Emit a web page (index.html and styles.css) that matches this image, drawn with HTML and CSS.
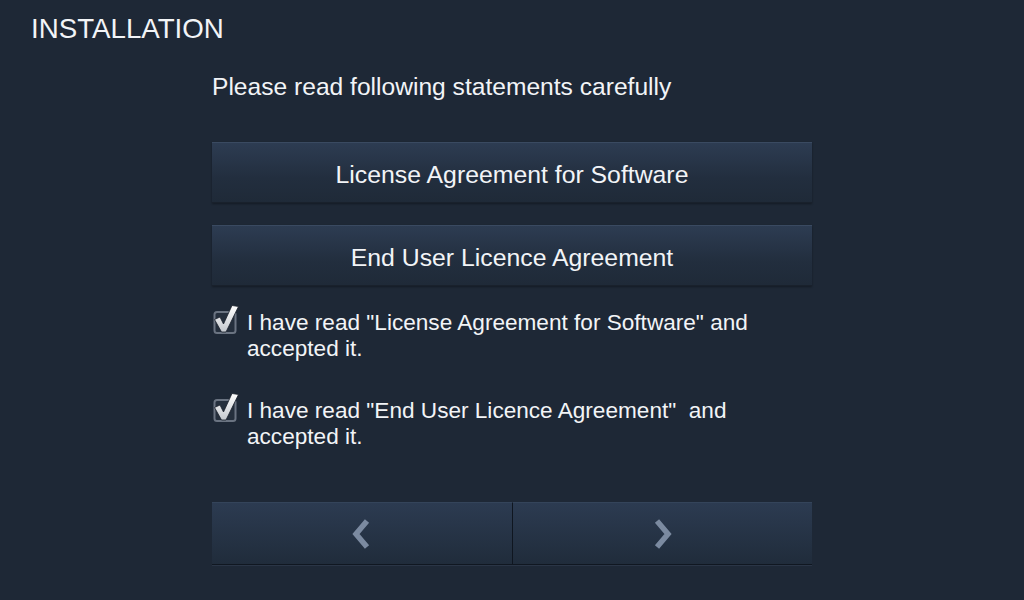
FILE: index.html
```html
<!DOCTYPE html>
<html lang="en">
<head>
    <meta charset="UTF-8">
    <title>Installation</title>
    <link rel="stylesheet" href="styles.css">
</head>
<body>
    <h1 class="title">INSTALLATION</h1>
    <div class="panel">
        <p class="intro">Please read following statements carefully</p>
        <button type="button" class="doc-btn">License Agreement for Software</button>
        <button type="button" class="doc-btn">End User Licence Agreement</button>
        <label class="check-row">
            <span class="check-box">
                <svg viewBox="0 0 26 29" width="26" height="29">
                    <defs>
                        <linearGradient id="tick" x1="0" y1="0" x2="0" y2="1">
                            <stop offset="0" stop-color="#ffffff"/>
                            <stop offset="1" stop-color="#c4c8ce"/>
                        </linearGradient>
                    </defs>
                    <rect x="1.5" y="7" width="21" height="21" rx="2.5" fill="#252f3d" stroke="#6a7381" stroke-width="2"/>
                    <path d="M1.5 14.5 L7 12 L10.5 19 L19 0.5 L25.5 1.5 L13 27 L8.5 27 Z" fill="url(#tick)" stroke="#1a212c" stroke-width="0.8"/>
                </svg>
            </span>
            <span class="check-text">I have read "License Agreement for Software" and<br>accepted it.</span>
        </label>
        <label class="check-row">
            <span class="check-box">
                <svg viewBox="0 0 26 29" width="26" height="29">
                    <rect x="1.5" y="7" width="21" height="21" rx="2.5" fill="#252f3d" stroke="#6a7381" stroke-width="2"/>
                    <path d="M1.5 14.5 L7 12 L10.5 19 L19 0.5 L25.5 1.5 L13 27 L8.5 27 Z" fill="url(#tick)" stroke="#1a212c" stroke-width="0.8"/>
                </svg>
            </span>
            <span class="check-text">I have read "End User Licence Agreement"&nbsp; and<br>accepted it.</span>
        </label>
        <div class="nav">
            <button type="button" class="nav-btn">
                <svg class="chevron" viewBox="0 0 20 30" width="20" height="30"><path d="M15 2 L4 15 L15 28" fill="none" stroke="#7b8aa0" stroke-width="5.5"/></svg>
            </button>
            <button type="button" class="nav-btn">
                <svg class="chevron" viewBox="0 0 20 30" width="20" height="30"><path d="M5 2 L16 15 L5 28" fill="none" stroke="#7b8aa0" stroke-width="5.5"/></svg>
            </button>
        </div>
    </div>
</body>
</html>
```

FILE: styles.css
```css
body {
    margin: 0;
    width: 1024px;
    height: 600px;
    overflow: hidden;
    background-color: #1e2836;
    color: #f2f4f7;
    font-family: "Liberation Sans", Arial, sans-serif;
}
.title {
    margin: 0;
    padding: 13px 0 0 31px;
    font-size: 27.7px;
    font-weight: normal;
    line-height: 31px;
}
.panel {
    width: 600px;
    margin: 0 auto;
    display: flex;
    flex-direction: column;
}
.intro {
    margin: 30px 0 0 0;
    font-size: 24.6px;
    line-height: 26px;
}
.doc-btn {
    height: 61px;
    margin-top: 42px;
    padding-top: 5px;
    border: none;
    border-top: 1px solid #3a4a61;
    border-bottom: 1px solid #19212c;
    background: linear-gradient(#2d3c52, #222e3e 60%, #1f2a38);
    color: #f2f4f7;
    font-family: "Liberation Sans", Arial, sans-serif;
    font-size: 24.8px;
    cursor: pointer;
    box-shadow: 0 1px 2px rgba(0, 0, 0, 0.35);
}
.doc-btn + .doc-btn {
    margin-top: 22px;
}
.check-row {
    display: flex;
    align-items: flex-start;
    gap: 8px;
    margin-top: 24px;
    font-size: 22.6px;
    line-height: 26px;
}
.check-row + .check-row {
    margin-top: 36px;
}
.check-box {
    width: 26px;
    height: 29px;
    padding-left: 1px;
    margin-top: -5px;
}
.nav {
    display: flex;
    margin-top: 52px;
    height: 62px;
    border-bottom: 1px solid #101721;
    box-shadow: 0 1px 0 #2a3546;
}
.nav-btn {
    flex: 1;
    padding: 0;
    border: none;
    border-top: 1px solid #34445a;
    background: linear-gradient(#2c3b51, #202c3b);
    display: flex;
    align-items: center;
    justify-content: center;
    cursor: pointer;
}
.nav-btn + .nav-btn {
    border-left: 1px solid #0f1620;
}
.chevron {
    flex: none;
    width: 20px;
    height: 30px;
}
```
